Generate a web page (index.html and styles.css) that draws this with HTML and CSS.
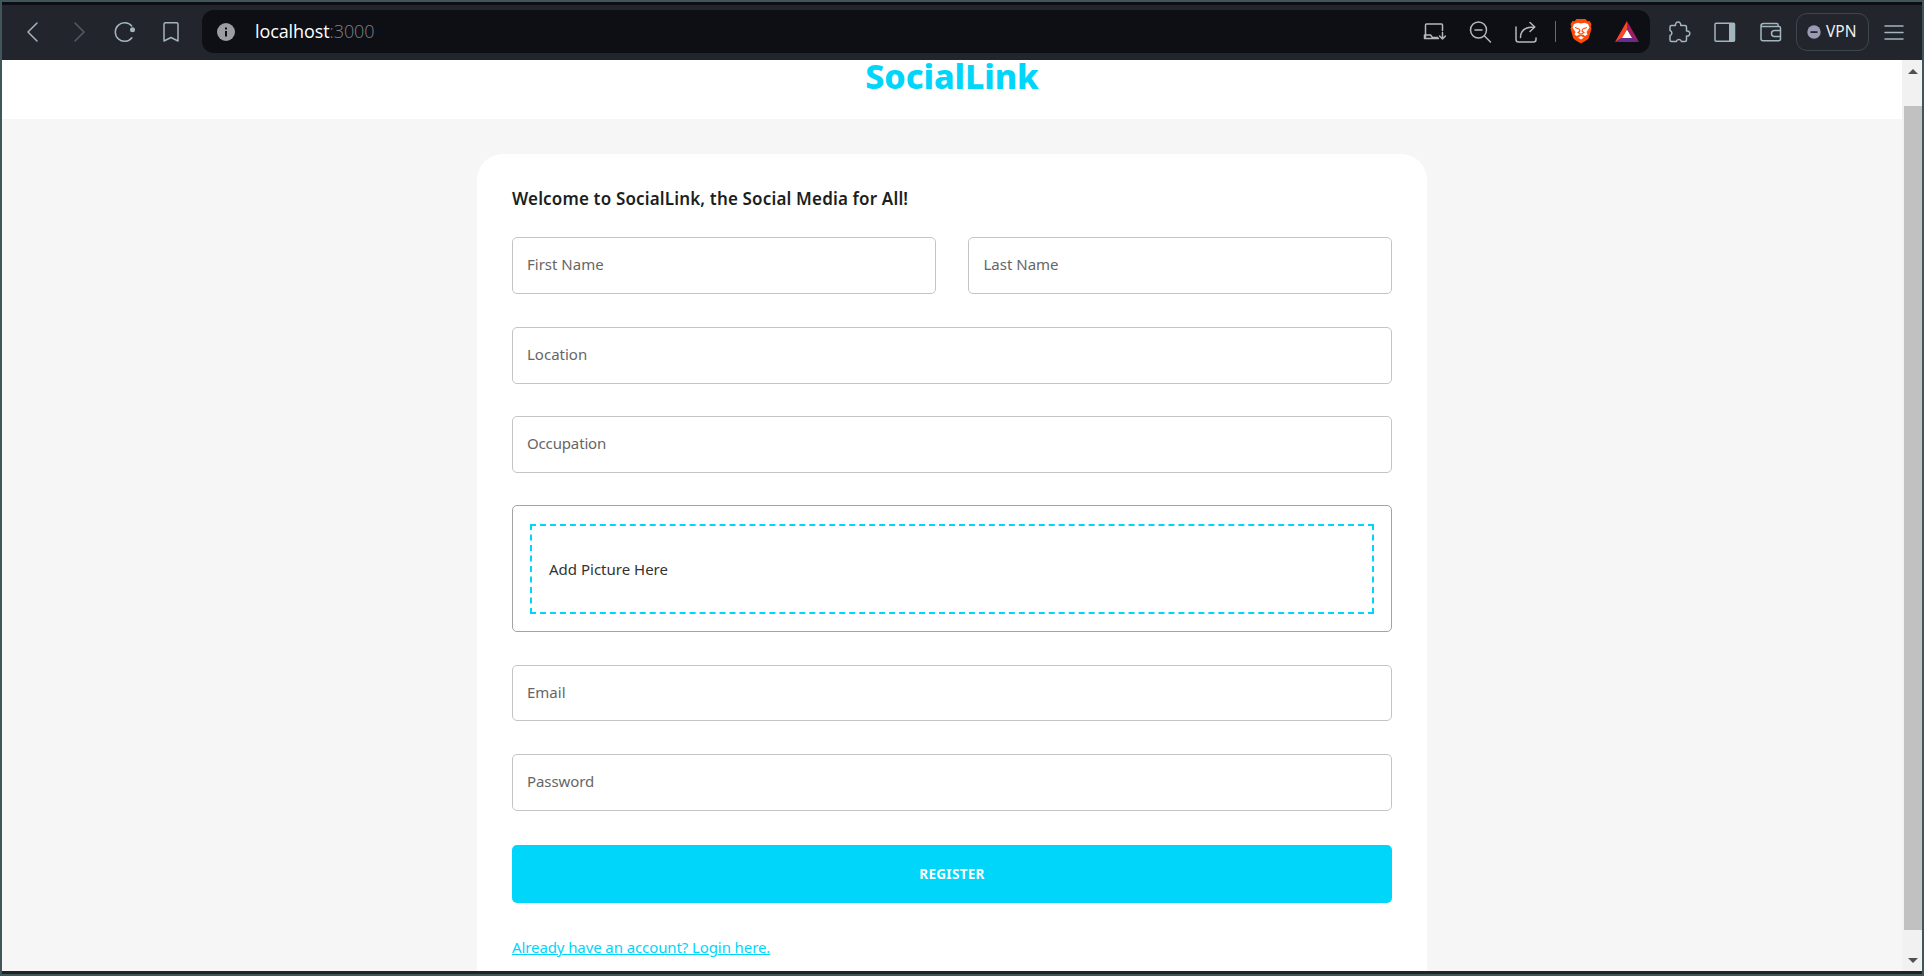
FILE: index.html
```
<!DOCTYPE html>
<html lang="en">
<head>
<meta charset="utf-8">
<title>SocialLink</title>
<link rel="stylesheet" href="styles.css">
</head>
<body>
<div class="window">
  <header class="toolbar">
    <nav class="nav-buttons">
      <svg class="icon" viewBox="0 0 24 24"><path d="M16 3 7 12l9 9"/></svg>
      <svg class="icon dim" viewBox="0 0 24 24"><path d="m8 3 9 9-9 9"/></svg>
      <svg class="icon" viewBox="0 0 24 24"><path d="M18.900 17.800A9.300 9.300 0 1 1 18.700 6"/><circle class="solid" cx="19.500" cy="9.800" r="2.500"/></svg>
      <svg class="icon" viewBox="0 0 24 24"><path d="M5 4.200Q5 2.700 6.500 2.700H17.500Q19 2.700 19 4.200V21L12 17.500 5 21Z"/></svg>
    </nav>
    <div class="address">
      <svg class="info" viewBox="0 0 18 18"><circle cx="9" cy="9" r="9"/><path d="M8 8h2v5.500H8zM8 4.500h2v2H8z"/></svg>
      <div class="url"><span class="host">localhost</span><span class="port">:3000</span></div>
      <div class="actions">
        <svg class="icon gray" viewBox="0 0 24 24"><path d="M20.500 10.500V5Q20.500 4 19.500 4H4.500Q3.500 4 3.500 5V17M2.500 15h6l2 2.500h5M2.500 15v3.500h14M20.500 12.500v6.500M17.500 16l3 3 3-3"/></svg>
        <svg class="icon gray" viewBox="0 0 24 24"><circle cx="10.500" cy="10" r="8"/><path d="m16.500 16 6 6M7 10h7"/></svg>
        <svg class="icon gray" viewBox="0 0 24 24"><path d="M2 7v12.500Q2 22 4.500 22h15q2.500 0 2.500-2.500V18M6.500 17.500C6.500 11 11 7 20.500 7M16 2.500 20.800 7 16 11.500"/></svg>
        <span class="divider"></span>
        <svg class="brave" viewBox="0 0 22 25"><path fill="#ff4b08" d="M6.500 0h9l2 2.300 2-.3L21.500 5l-.7 2.500.7 2-2.500 9Q18.500 20 16.500 21.200L11 24.500 5.500 21.200Q3.500 20 3 18.500l-2.500-9 .7-2L.5 5l2-3 2 .3z"/><path fill="#fff" d="m4 5 3.500-1.300 3.500.8 3.500-.8L18 5l1.500 3.500-3 4.500 1 2.500-2.500 1.500-2-1.500-2 .8-2-.8-2 1.500-2.500-1.500 1-2.500-3-4.500zM8 18.500l3-1.500 3 1.500-3 2z"/><path fill="none" stroke="#ff4b08" stroke-width="1.100" d="m5 8.500 4.200 1.500M17 8.500l-4.200 1.500M9.200 10 10 12l-2 1.500 3 1.800 3-1.800-2-1.500.8-2"/></svg>
        <svg class="bat" viewBox="0 0 24 22"><path fill="#ff4724" d="M12 0v8l-5 9L0 21z"/><path fill="#9e1f63" d="M12 0v8l5 9 7 4z"/><path fill="#662d91" d="m0 21 7-4.500h10L24 21z"/><path fill="#fff" d="m12 8.500 5 8.500H7z"/></svg>
      </div>
    </div>
    <div class="tools">
      <svg class="icon" viewBox="0 0 24 24"><path d="M4.500 5.500H8.500a2.700 2.700 0 1 1 5.200 0H18Q19.500 5.500 19.500 7v4a2.600 2.600 0 1 1 0 5v4Q19.500 21.500 18 21.500H14.500a2.700 2.700 0 0 0-5.200 0H4.500Q3 21.500 3 20v-4.500a2.600 2.600 0 0 0 0-5V7Q3 5.500 4.500 5.500Z"/></svg>
      <svg class="icon" viewBox="0 0 24 24"><rect x="2" y="3.300" width="19.500" height="18" rx="1"/><path class="solid" d="M16 3.500h5.500v17.500H16z"/></svg>
      <svg class="icon" viewBox="0 0 24 24"><path d="M19 6.500V4.500Q19 3.500 18 3.500H4.500Q2 3.500 2 5.800V19Q2 20.700 4 20.700H19.500Q21.500 20.700 21.500 19V8Q21.500 6.500 20 6.500H4Q2 6.500 2 5.200M21.500 10.500H15.500Q12.500 10.500 12.500 13.500T15.500 16.500H21.500"/></svg>
      <div class="vpn"><svg viewBox="0 0 14 14"><circle cx="7" cy="7" r="6.700"/><path d="M3.500 6.200h7v1.800h-7z"/></svg><span>VPN</span></div>
      <svg class="icon menu" viewBox="0 0 24 24"><path d="M3 6h18M3 12.500h18M3 19h18"/></svg>
    </div>
  </header>
  <div class="viewport">
    <main class="page">
      <div class="brand-bar"><span class="brand">SocialLink</span></div>
      <div class="content">
        <form class="card">
          <h1 class="welcome">Welcome to SocialLink, the Social Media for All!</h1>
          <div class="row">
            <div class="field"><span>First Name</span></div>
            <div class="field last-name"><span>Last Name</span></div>
          </div>
          <div class="field location"><span>Location</span></div>
          <div class="field occupation"><span>Occupation</span></div>
          <div class="upload"><div class="dropzone">Add Picture Here</div></div>
          <div class="field email"><span>Email</span></div>
          <div class="field password"><span>Password</span></div>
          <div class="register">REGISTER</div>
          <a class="login">Already have an account? Login here.</a>
        </form>
      </div>
    </main>
    <aside class="scrollbar">
      <svg class="arrow" viewBox="0 0 10 5"><path d="M0 5 5 0l5 5z"/></svg>
      <div class="thumb"></div>
      <svg class="arrow" viewBox="0 0 10 5"><path d="M0 0h10L5 5z"/></svg>
    </aside>
  </div>
</div>
</body>
</html>
```
FILE: styles.css
```
* { box-sizing: border-box; }
body {
  margin: 0;
  width: 1924px;
  height: 976px;
  overflow: hidden;
  background: #41565a;
  padding: 2px;
  font-family: "Noto Sans", "Open Sans", sans-serif;
}
.window {
  height: 972px;
  display: flex;
  flex-direction: column;
  border-bottom: 3px solid #1f2423;
}
.toolbar {
  flex: none;
  height: 58px;
  border-top: 3px solid #0d0e13;
  background: #22252c;
  display: flex;
  align-items: flex-start;
  padding-top: 5px;
}
.icon {
  flex: none;
  width: 24px;
  height: 24px;
  fill: none;
  stroke: #a3b5bd;
  stroke-width: 1.5;
  stroke-linejoin: round;
  stroke-linecap: round;
}
.icon .solid { fill: #a3b5bd; stroke: none; }
.icon.dim { stroke: #555b65; }
.icon.gray { stroke: #b6b7ba; }
.nav-buttons {
  width: 200px;
  height: 43px;
  padding-left: 19px;
  display: flex;
  align-items: center;
  gap: 22px;
}
.address {
  width: 1448px;
  height: 43px;
  border-radius: 12px;
  background: #0e0f14;
  display: flex;
  align-items: center;
  padding: 0 11px 0 15px;
}
.info { width: 18px; height: 18px; fill: #9b9da5; }
.info path { fill: #0e0f14; }
.url {
  flex: 1;
  margin-left: 20px;
  padding-bottom: 2px;
  font-family: "Open Sans", sans-serif;
  font-size: 18px;
  line-height: 24px;
  letter-spacing: -0.1px;
}
.host { color: #fff; }
.port { color: #7d8087; font-weight: 300; }
.actions { display: flex; align-items: center; gap: 22px; }
.divider { width: 1px; height: 21px; background: #696c73; margin: 0 -8px 0 -5px; }
.brave { width: 22px; height: 25px; margin-right: 1px; }
.bat { width: 24px; height: 22px; }
.tools { display: flex; align-items: center; height: 43px; padding-left: 17px; gap: 22px; }
.vpn {
  width: 73px;
  height: 38px;
  border: 1px solid #3c474e;
  border-radius: 11px;
  margin: 0 -9px;
  display: flex;
  align-items: center;
  gap: 5px;
  padding-left: 10px;
  color: #f0f0f2;
  font-size: 15.5px;
}
.vpn svg { width: 14px; height: 14px; fill: #999bb5; }
.vpn path { fill: #22252c; }
.vpn span { padding-bottom: 2px; }
.viewport { flex: 1; min-height: 0; display: flex; background: #fff; }
.page { width: 1900px; overflow: hidden; background: #f6f6f6; display: flex; flex-direction: column; }
.brand-bar { flex: none; height: 59px; background: #fff; text-align: center; }
.brand {
  display: block;
  font-size: 34px;
  line-height: 32px;
  font-weight: 800;
  letter-spacing: -0.1px;
  color: #00d5fa;
}
.content { padding: 35px 475px 0; }
.card {
  display: flex;
  flex-direction: column;
  height: 900px;
  padding: 31px 35px;
  background: #fff;
  border-radius: 26px;
}
.welcome {
  margin: 0 0 25px;
  font-size: 17px;
  line-height: 27px;
  font-weight: 600;
  letter-spacing: 0.16px;
  color: #1c1f20;
  white-space: nowrap;
}
.row { display: flex; gap: 32px; margin-bottom: 33px; }
.row .field { flex: 1; }
.field {
  height: 57px;
  flex: none;
  border: 1px solid #c4c4c4;
  border-radius: 5px;
  padding: 0 0 3px 14px;
  display: flex;
  align-items: center;
  font-size: 15px;
  color: #666;
  white-space: nowrap;
}
.last-name { padding-left: 15px; }
.location { margin-bottom: 32px; }
.occupation { margin-bottom: 32px; letter-spacing: -0.15px; }
.email { height: 56px; margin-bottom: 33px; }
.password { margin-bottom: 34px; letter-spacing: -0.1px; }
.upload {
  height: 127px;
  flex: none;
  border: 1px solid #a3a3a3;
  border-radius: 5px;
  padding: 18px 17px;
  margin-bottom: 33px;
}
.dropzone {
  height: 90px;
  border: 2px dashed #00d5fa;
  padding: 0 0 1px 17px;
  display: flex;
  align-items: center;
  font-size: 15px;
  color: #333;
}
.register {
  height: 58px;
  flex: none;
  border-radius: 5px;
  background: #00d5fa;
  color: #fff;
  font-size: 13.5px;
  font-weight: 700;
  letter-spacing: 0.3px;
  display: flex;
  align-items: center;
  justify-content: center;
  margin-bottom: 33px;
}
.login {
  font-size: 15px;
  line-height: 22px;
  letter-spacing: -0.1px;
  color: #00d5fa;
  text-decoration: underline;
  white-space: nowrap;
}
.scrollbar {
  width: 20px;
  padding: 9px 0 8px 2px;
  background: #f1f1f1;
  display: flex;
  flex-direction: column;
  align-items: center;
}
.arrow { width: 10px; height: 5px; fill: #505050; }
.thumb { width: 18px; height: 824px; margin: 32px 0 auto; background: #c1c1c1; }
```
